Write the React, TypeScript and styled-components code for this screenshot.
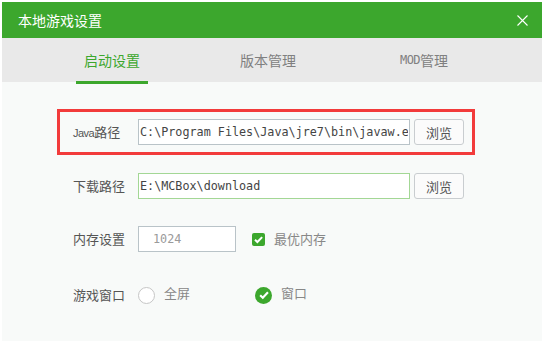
import React from "react";
import styled, { createGlobalStyle } from "styled-components";

const GlobalStyle = createGlobalStyle`
  body {
    margin: 0;
    background: #fff;
    font-family: "Noto Sans CJK SC", "Liberation Sans", sans-serif;
  }
`;

const green = "#3ca72d";
const mono = `"DejaVu Sans Mono", "Liberation Mono", "Noto Sans CJK SC", monospace`;

const Dialog = styled.div`
  margin: 2px;
  width: 540px;
  height: 339px;
  background: #f8faf9;
  display: flex;
  flex-direction: column;
`;

const Header = styled.div`
  height: 36px;
  flex-shrink: 0;
  background: ${green};
  display: flex;
  align-items: center;
  justify-content: space-between;
  padding: 0 14px 0 16px;
  color: #fff;
  font-size: 14px;
  line-height: 16px;
`;

const CloseButton = styled.div`
  width: 11px;
  height: 11px;
  display: grid;
  place-content: center;
  cursor: pointer;
`;

const TabBar = styled.div`
  height: 44px;
  flex-shrink: 0;
  background: #e9e9e9;
  display: flex;
  padding-left: 32px;
`;

const Tab = styled.div<{ $active?: boolean }>`
  width: 156px;
  display: flex;
  align-items: center;
  justify-content: center;
  position: relative;
  font-size: 14px;
  line-height: 16px;
  color: ${(p) => (p.$active ? green : "#808080")};

  &::after {
    content: "";
    display: ${(p) => (p.$active ? "block" : "none")};
    position: absolute;
    left: 50%;
    bottom: -2px;
    width: 72px;
    height: 3px;
    margin-left: -36px;
    background: ${green};
  }
`;

const Latin = styled.span`
  font-family: ${mono};
  font-size: 12px;
  letter-spacing: -0.5px;
`;

const Content = styled.div`
  padding: 27px 67px 0 55px;
  display: flex;
  flex-direction: column;
`;

const HighlightBox = styled.div`
  height: 46px;
  box-sizing: border-box;
  border: 3px solid #f23b3b;
  padding: 0 8px 0 13px;
  display: flex;
  align-items: center;
`;

const Row = styled.div<{ $top?: number; $indent?: number }>`
  display: flex;
  align-items: center;
  height: 26px;
  margin-top: ${(p) => p.$top ?? 0}px;
  padding-left: ${(p) => p.$indent ?? 16}px;
`;

const Label = styled.div`
  width: 65px;
  font-size: 13px;
  line-height: 16px;
  color: #555;
`;

const SmallLatin = styled.span`
  font-family: "Liberation Sans", sans-serif;
  font-size: 11px;
  letter-spacing: -0.5px;
`;

const TextInput = styled.input<{ $width: number; $focused?: boolean; $muted?: boolean }>`
  width: ${(p) => p.$width}px;
  height: 26px;
  box-sizing: border-box;
  border: 1px solid ${(p) => (p.$focused ? "#a3d795" : "#b9c3c8")};
  background: #fff;
  padding: 0 1px 0 ${(p) => (p.$muted ? 14 : 1)}px;
  margin: 0;
  font-family: ${mono};
  font-size: 11.75px;
  color: ${(p) => (p.$muted ? "#9a9a9a" : "#444")};
  outline: none;
`;

const BrowseButton = styled.button`
  width: 50px;
  height: 26px;
  margin: 0 0 0 4px;
  padding: 0;
  border: 1px solid #c9cdd0;
  border-radius: 3px;
  background: #fbfbfb;
  font-family: "Noto Sans CJK SC", sans-serif;
  font-size: 13px;
  color: #555;
  cursor: pointer;
`;

const CheckBox = styled.div`
  width: 13px;
  height: 13px;
  margin-left: 16px;
  border-radius: 2px;
  background: ${green};
  display: grid;
  place-content: center;
`;

const OptionText = styled.span`
  margin-left: 9px;
  font-size: 13px;
  line-height: 16px;
  color: #888;
`;

const Option = styled.div`
  width: 117px;
  display: flex;
  align-items: center;
`;

const Radio = styled.div<{ $checked?: boolean }>`
  width: 17px;
  height: 17px;
  box-sizing: border-box;
  border-radius: 50%;
  border: ${(p) => (p.$checked ? "none" : "1.5px solid #c6c6c6")};
  background: ${(p) => (p.$checked ? green : "#fff")};
  display: grid;
  place-content: center;
  flex-shrink: 0;
`;

const RadioText = styled(OptionText)`
  margin-bottom: 5px;
`;

const Check = ({ size }: { size: number }) => (
  <svg width={size} height={size} viewBox="0 0 10 10">
    <path d="M1.8 5.2 L4 7.3 L8.3 2.8" fill="none" stroke="#fff" strokeWidth="1.8" />
  </svg>
);

export default function App() {
  return (
    <>
      <GlobalStyle />
      <Dialog>
        <Header>
          <span>本地游戏设置</span>
          <CloseButton>
            <svg width="11" height="11" viewBox="0 0 11 11">
              <path d="M0.5 0.5 L10.5 10.5 M10.5 0.5 L0.5 10.5" stroke="#fff" strokeWidth="1.1" />
            </svg>
          </CloseButton>
        </Header>
        <TabBar>
          <Tab $active>启动设置</Tab>
          <Tab>版本管理</Tab>
          <Tab>
            <Latin>MOD</Latin>管理
          </Tab>
        </TabBar>
        <Content>
          <HighlightBox>
            <Row $indent={0}>
              <Label>
                <SmallLatin>Java</SmallLatin>路径
              </Label>
              <TextInput $width={272} readOnly value={"C:\\Program Files\\Java\\jre7\\bin\\javaw.exe"} />
              <BrowseButton>浏览</BrowseButton>
            </Row>
          </HighlightBox>
          <Row $top={18}>
            <Label>下载路径</Label>
            <TextInput $width={272} $focused readOnly value={"E:\\MCBox\\download"} />
            <BrowseButton>浏览</BrowseButton>
          </Row>
          <Row $top={27}>
            <Label>内存设置</Label>
            <TextInput $width={98} $muted readOnly value="1024" />
            <CheckBox>
              <Check size={11} />
            </CheckBox>
            <OptionText>最优内存</OptionText>
          </Row>
          <Row $top={30}>
            <Label>游戏窗口</Label>
            <Option>
              <Radio />
              <RadioText>全屏</RadioText>
            </Option>
            <Option>
              <Radio $checked>
                <Check size={12} />
              </Radio>
              <RadioText>窗口</RadioText>
            </Option>
          </Row>
        </Content>
      </Dialog>
    </>
  );
}
